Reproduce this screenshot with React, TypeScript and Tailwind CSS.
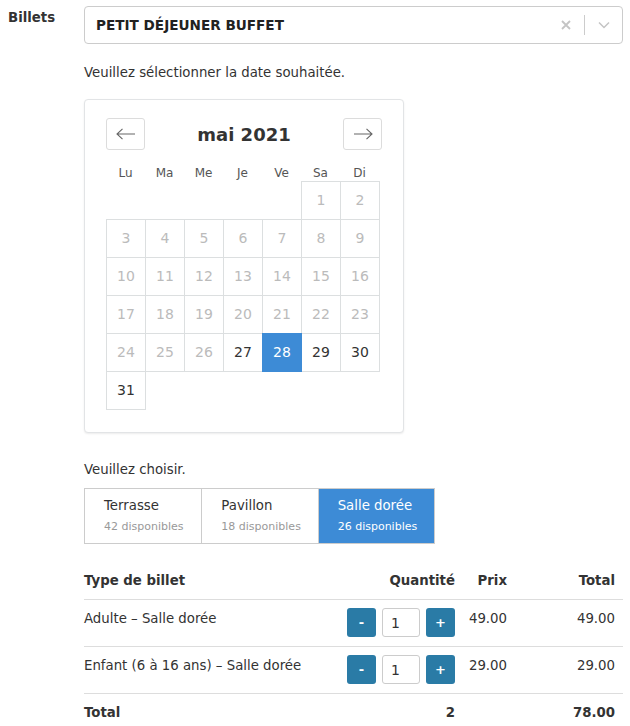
const font = "font-['DejaVu_Sans',Verdana,sans-serif]";

const weekdays = ["Lu", "Ma", "Me", "Je", "Ve", "Sa", "Di"];

// null = empty cell, number = day of month
const days: (number | null)[] = [
  null, null, null, null, null, 1, 2,
  3, 4, 5, 6, 7, 8, 9,
  10, 11, 12, 13, 14, 15, 16,
  17, 18, 19, 20, 21, 22, 23,
  24, 25, 26, 27, 28, 29, 30,
  31,
];

const firstAvailable = 27;
const selectedDay = 28;

const areas = [
  { name: "Terrasse", count: 42 },
  { name: "Pavillon", count: 18 },
  { name: "Salle dorée", count: 26 },
];

const rows = [
  { label: "Adulte – Salle dorée", qty: 1, price: "49.00", total: "49.00" },
  { label: "Enfant (6 à 16 ans) – Salle dorée", qty: 1, price: "29.00", total: "29.00" },
];

function Arrow({ dir }: { dir: "left" | "right" }) {
  return (
    <svg width="20" height="12" viewBox="0 0 20 12" fill="none" stroke="#666" strokeWidth="1.1">
      {dir === "left" ? (
        <path d="M1 6h18M6.5 0.8L1 6l5.5 5.2" />
      ) : (
        <path d="M1 6h18M13.5 0.8L19 6l-5.5 5.2" />
      )}
    </svg>
  );
}

function Calendar() {
  return (
    <div className="w-[320px] rounded border border-[#e2e4e6] bg-white px-[21px] pt-[18px] pb-[22px] shadow-[0_1px_2px_rgba(0,0,0,0.08)]">
      <div className="flex h-[32px] items-center justify-between">
        <button className="flex h-[32px] w-[39px] items-center justify-center rounded-[3px] border border-[#dcdcdc] bg-white">
          <Arrow dir="left" />
        </button>
        <div className="text-[18px] font-bold text-[#333]">mai 2021</div>
        <button className="flex h-[32px] w-[39px] items-center justify-center rounded-[3px] border border-[#dcdcdc] bg-white">
          <Arrow dir="right" />
        </button>
      </div>
      <div className="mt-[16px] grid grid-cols-[repeat(7,39px)] text-[12px] leading-[15px] text-[#555]">
        {weekdays.map((d) => (
          <div key={d} className="text-center">
            {d}
          </div>
        ))}
      </div>
      <div className="grid grid-cols-[repeat(7,39px)] auto-rows-[38px] pl-px pt-px">
        {days.map((d, i) => {
          if (d === null) return <div key={i} />;
          const selected = d === selectedDay;
          const enabled = d >= firstAvailable;
          return (
            <div
              key={i}
              className={`relative -ml-px -mt-px flex h-[39px] w-[40px] items-center justify-center border text-[14px] ${
                selected
                  ? "z-10 border-[#3d8bd6] bg-[#3d8bd6] text-white"
                  : enabled
                  ? "border-[#dcdfe0] text-[#333]"
                  : "border-[#dcdfe0] text-[#bbb]"
              }`}
            >
              {d}
            </div>
          );
        })}
      </div>
    </div>
  );
}

function QtyControl({ value }: { value: number }) {
  return (
    <div className="flex items-center gap-[6px]">
      <button className="flex h-[29px] w-[29px] items-center justify-center rounded-[3px] bg-[#2a7ba6] text-[13px] font-bold text-white">
        -
      </button>
      <div className="flex h-[29px] w-[38px] items-center rounded-[3px] border border-[#ccc] bg-white pl-[8px] text-[14px] text-[#333]">
        {value}
      </div>
      <button className="flex h-[29px] w-[29px] items-center justify-center rounded-[3px] bg-[#2a7ba6] text-[13px] font-bold text-white">
        +
      </button>
    </div>
  );
}

export default function App() {
  return (
    <div className={`${font} min-h-[726px] w-[630px] bg-white text-[13.3px] text-[#333]`}>
      <div className="flex pt-[6px] pr-[7px]">
        <div className="w-[84px] pl-[8px] pt-[4px] text-[13.3px] font-bold leading-[16px] text-[#333]">Billets</div>
        <div className="flex-1">
          {/* select */}
          <div className="flex h-[38px] items-center rounded border border-[#ccc] bg-white pl-[11px]">
            <div className="flex-1 text-[13.6px] font-bold text-[#222]">PETIT DÉJEUNER BUFFET</div>
            <div className="flex items-center">
              <svg width="10" height="10" viewBox="0 0 10 10" stroke="#c4c4c4" strokeWidth="1.8">
                <path d="M1 1l8 8M9 1l-8 8" />
              </svg>
              <div className="mx-[13px] h-[20px] w-px bg-[#ccc]" />
              <svg className="mr-[12px]" width="12" height="8" viewBox="0 0 12 8" fill="none" stroke="#c4c4c4" strokeWidth="1.5">
                <path d="M1 1.5l5 5 5-5" />
              </svg>
            </div>
          </div>

          <p className="mt-[20px] leading-[18px]">Veuillez sélectionner la date souhaitée.</p>

          <div className="mt-[17px]">
            <Calendar />
          </div>

          <p className="mt-[28px] leading-[18px]">Veuillez choisir.</p>

          <div className="mt-[9px] flex w-[351px] border border-[#ccc]">
            {areas.map((a, i) => {
              const active = a.name === "Salle dorée";
              return (
                <div
                  key={a.name}
                  className={`flex h-[54px] w-[117px] flex-col justify-center pl-[19px] ${
                    i > 0 ? "border-l border-[#ccc]" : ""
                  } ${active ? "bg-[#3d8bd6] text-white" : "bg-white text-[#333]"}`}
                >
                  <div className="-mt-[2px] text-[13.3px] leading-[18px]">{a.name}</div>
                  <div className={`mt-[5px] text-[11px] leading-[14px] ${active ? "text-white" : "text-[#999]"}`}>
                    {a.count} disponibles
                  </div>
                </div>
              );
            })}
          </div>

          {/* tickets table */}
          <div className="mt-[19px]">
            <div className="flex border-b border-[#ddd] py-[8px] font-bold leading-[20px]">
              <div className="flex-1">Type de billet</div>
              <div className="w-[140px] pr-[8px] text-right">Quantité</div>
              <div className="w-[52px] pr-[8px] text-right">Prix</div>
              <div className="w-[108px] pr-[8px] text-right">Total</div>
            </div>
            {rows.map((r) => (
              <div key={r.label} className="flex border-b border-[#ddd] pt-[8px] pb-[9px] leading-[20px]">
                <div className="flex-1 pt-[1px]">{r.label}</div>
                <div className="flex w-[140px] justify-end pr-[8px]">
                  <QtyControl value={r.qty} />
                </div>
                <div className="w-[52px] pt-[1px] pr-[8px] text-right">{r.price}</div>
                <div className="w-[108px] pt-[1px] pr-[8px] text-right">{r.total}</div>
              </div>
            ))}
            <div className="flex py-[9px] font-bold leading-[20px]">
              <div className="flex-1">Total</div>
              <div className="w-[140px] pr-[8px] text-right">2</div>
              <div className="w-[52px] pr-[8px] text-right" />
              <div className="w-[108px] pr-[8px] text-right">78.00</div>
            </div>
          </div>
        </div>
      </div>
    </div>
  );
}
